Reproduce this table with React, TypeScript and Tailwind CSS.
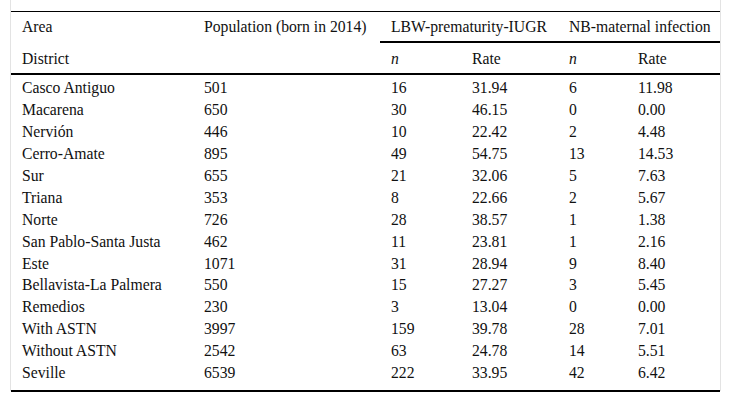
import React from "react";

const rows: [string, string, string, string, string, string][] = [
  ["Casco Antiguo", "501", "16", "31.94", "6", "11.98"],
  ["Macarena", "650", "30", "46.15", "0", "0.00"],
  ["Nervión", "446", "10", "22.42", "2", "4.48"],
  ["Cerro-Amate", "895", "49", "54.75", "13", "14.53"],
  ["Sur", "655", "21", "32.06", "5", "7.63"],
  ["Triana", "353", "8", "22.66", "2", "5.67"],
  ["Norte", "726", "28", "38.57", "1", "1.38"],
  ["San Pablo-Santa Justa", "462", "11", "23.81", "1", "2.16"],
  ["Este", "1071", "31", "28.94", "9", "8.40"],
  ["Bellavista-La Palmera", "550", "15", "27.27", "3", "5.45"],
  ["Remedios", "230", "3", "13.04", "0", "0.00"],
  ["With ASTN", "3997", "159", "39.78", "28", "7.01"],
  ["Without ASTN", "2542", "63", "24.78", "14", "5.51"],
  ["Seville", "6539", "222", "33.95", "42", "6.42"],
];

const cols = "grid grid-cols-[182px_187px_81px_97px_69px_1fr]";

export default function App() {
  return (
    <div className="w-[731px] h-[401px] bg-white" style={{ fontFamily: '"Liberation Serif", "Times New Roman", serif' }}>
      <div className="ml-[10px] w-[711px] h-[391px] border-x border-[#e3e3e3] pt-[11px]">
        <div className="w-[709px] text-[15.7px] leading-[17px] text-[#111]">
          <div className="border-t border-black">
            <div className={cols}>
              <div className="h-[31px] pl-[11px] flex items-center border-b-2 border-transparent">Area</div>
              <div className="h-[31px] pl-[11px] flex items-center border-b-2 border-transparent whitespace-nowrap">Population (born in 2014)</div>
              <div className="col-span-2 h-[31px] pl-[11px] flex items-center border-b-2 border-black whitespace-nowrap">LBW-prematurity-IUGR</div>
              <div className="col-span-2 h-[31px] pl-[11px] flex items-center border-b-2 border-black whitespace-nowrap">NB-maternal infection</div>
            </div>
            <div className={`${cols} border-b-2 border-black`}>
              <div className="h-[30px] pl-[11px] flex items-center">District</div>
              <div className="h-[30px] pl-[11px] flex items-center"></div>
              <div className="h-[30px] pl-[11px] flex items-center italic">n</div>
              <div className="h-[30px] pl-[11px] flex items-center">Rate</div>
              <div className="h-[30px] pl-[11px] flex items-center italic">n</div>
              <div className="h-[30px] pl-[11px] flex items-center">Rate</div>
            </div>
          </div>
          <div className="pt-[2px] pb-[7px] border-b-2 border-black">
            {rows.map((r) => (
              <div key={r[0]} className={`${cols} h-[21.9px] items-center`}>
                {r.map((c, i) => (
                  <div key={i} className="pl-[11px] whitespace-nowrap">{c}</div>
                ))}
              </div>
            ))}
          </div>
        </div>
      </div>
    </div>
  );
}
